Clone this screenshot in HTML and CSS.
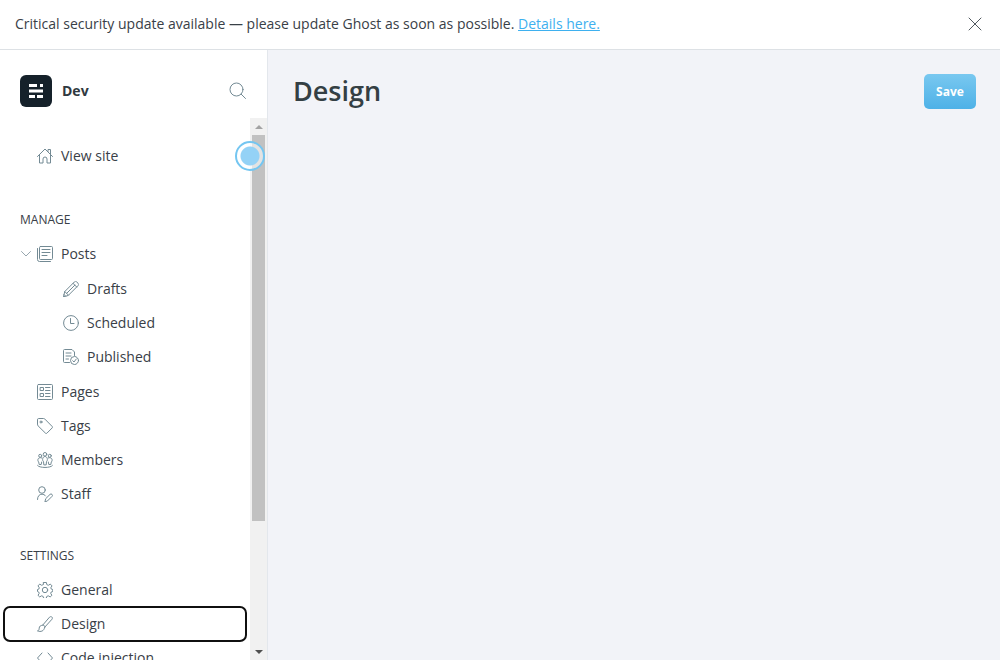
FILE: index.html
```html
<!DOCTYPE html>
<html lang="en">
<head>
<meta charset="utf-8">
<title>Design - Dev</title>
<link rel="stylesheet" href="styles.css">
</head>
<body>
<div class="app">
  <aside class="alert">
    <p>Critical security update available — please update Ghost as soon as possible. <a href="#details">Details here.</a></p>
    <button class="alert-close" type="button" aria-label="Close"><svg viewBox="0 0 14 14"><path d="M1 1l12 12M13 1L1 13"/></svg></button>
  </aside>
  <div class="viewport">
    <nav class="sidebar" aria-label="Main">
      <header class="site">
        <svg class="site-logo" viewBox="0 0 32 32"><rect width="32" height="32" rx="6" fill="#15212a"/><path fill="#fff" d="M9 9h8v3H9zM20 9h3v3h-3zM9 14.500h14v3H9zM9 20h6v3H9zM17 20h6v3h-6z"/></svg>
        <span class="site-name">Dev</span>
        <button class="search" type="button" aria-label="Search"><svg viewBox="0 0 18 18"><circle cx="7.500" cy="7.500" r="6.500"/><path d="M12.200 12.200l4.300 4.300"/></svg></button>
      </header>
      <div class="nav-body">
        <div class="nav-scroll">
          <ul class="nav-list nav-top">
            <li><a class="nav-item" href="#site"><svg class="icon" viewBox="0 0 16 16"><path d="M.5 8.500L8 1l7.500 7.500M2.500 7v8h3.500v-4a2 2 0 0 1 4 0v4h3.500V7M11 3.500v-2h2.500v4.500"/></svg>View site</a></li>
          </ul>
          <h2 class="nav-title">Manage</h2>
          <ul class="nav-list">
            <li class="nav-parent">
              <button class="expand" type="button" aria-label="Collapse posts"><svg viewBox="0 0 10 6"><path d="M.5.5L5 5 9.500.5"/></svg></button>
              <a class="nav-item" href="#posts"><svg class="icon" viewBox="0 0 16 16"><rect x="2.500" y=".5" width="13" height="13" rx="1"/><path d="M.5 2.500v11a2 2 0 0 0 2 2h11M5 3.500h8M5 6.500h8M5 9.500h5"/></svg>Posts</a>
              <ul class="nav-sub">
                <li><a class="nav-item" href="#drafts"><svg class="icon" viewBox="0 0 16 16"><path d="M.5 15.500l1.300-5L11.300 1a1.700 1.700 0 0 1 2.500 0L15 2.200a1.700 1.700 0 0 1 0 2.500L5.500 14.200zM1.800 10.500l3.700 3.700M10 2.300L13.700 6M3.700 12.300l8.200-8.200M1 13.500l1.500 1.500"/></svg>Drafts</a></li>
                <li><a class="nav-item" href="#scheduled"><svg class="icon" viewBox="0 0 16 16"><circle cx="8" cy="8" r="7.400"/><path d="M7.500 3.500v5H11"/></svg>Scheduled</a></li>
                <li><a class="nav-item" href="#published"><svg class="icon" viewBox="0 0 16 16"><path d="M6.500 13.500h-5a1 1 0 0 1-1-1v-11a1 1 0 0 1 1-1H9L11.500 3v3.500M3 4h5M3 7h5M3 10h2.500"/><circle cx="11.500" cy="11.500" r="4"/><path d="M9.700 11.700l1.300 1.300 2.300-3"/></svg>Published</a></li>
              </ul>
            </li>
            <li><a class="nav-item" href="#pages"><svg class="icon" viewBox="0 0 16 16"><rect x=".5" y=".5" width="15" height="15" rx="1"/><path d="M3.500 3.500h3v3h-3zM3.500 9.500h3v3h-3zM8.500 3.500H13M8.500 6.500H13M8.500 9.500H13M8.500 12.500H13"/></svg>Pages</a></li>
            <li><a class="nav-item" href="#tags"><svg class="icon" viewBox="0 0 16 16"><path d="M.5 1.500a1 1 0 0 1 1-1h5a2 2 0 0 1 1.400.6l7.300 7.400a1 1 0 0 1 0 1.400l-5.300 5.300a1 1 0 0 1-1.400 0L1.100 7.900A2 2 0 0 1 .5 6.500z"/><circle cx="4" cy="4" r="1"/></svg>Tags</a></li>
            <li><a class="nav-item" href="#members"><svg class="icon" viewBox="0 0 16 16"><circle cx="8" cy="2.300" r="1.800"/><circle cx="3.200" cy="3.800" r="1.500"/><circle cx="12.800" cy="3.800" r="1.500"/><path d="M6.800 12.500L6.500 9.500C4.900 8.500 5.500 4.500 8 4.500s3.100 4 1.500 5l-.3 3zM4.700 5.900C1.500 4.500-.3 8 1.700 10l.5 2.500h2l.5-2.500M11.300 5.900c3.200-1.400 5 2.100 3 4.100l-.5 2.500h-2l-.5-2.500M.5 13.500c1.500 2.700 13.500 2.700 15 0"/></svg>Members</a></li>
            <li><a class="nav-item" href="#staff"><svg class="icon" viewBox="0 0 16 16"><circle cx="5" cy="4" r="3.300"/><path d="M.5 13.500c0-3.500 2-5.300 4.500-5.300 1.500 0 2.700.6 3.500 1.700M8 15.500l.7-2.800 4.300-4.300a1.300 1.300 0 0 1 2 2l-4.300 4.300z"/></svg>Staff</a></li>
          </ul>
          <h2 class="nav-title">Settings</h2>
          <ul class="nav-list">
            <li><a class="nav-item" href="#general"><svg class="icon" viewBox="0 0 16 16"><path d="M6.600.5h2.800l.4 2.100 1.500.7 2-1.200 1.700 1.800-1.200 1.900.5 1.300 1.500.4v2l-1.600.5-.5 1.300 1.200 2-1.700 1.600-2-1.100-1.500.7-.4 1.900H6.600l-.4-1.900-1.500-.7-2 1.100L1 13.300l1.200-2-.5-1.300L.5 9.500v-2l1.300-.4.5-1.300L1 3.900l1.700-1.800 2 1.200 1.500-.7z"/><circle cx="8" cy="8" r="2.700"/></svg>General</a></li>
            <li><a class="nav-item nav-focused" href="#design"><svg class="icon" viewBox="0 0 16 16"><path d="M6 8.800L12.500 1.200c1.500-1.500 3.800.2 2.500 2L8.200 10.700M6 8.800l2.200 1.900M5.500 9.300c-2 0-3.200 1-3.300 2.900 0 1.500-.5 2.400-1.700 2.700 3.300 1.300 6.700.3 7.200-3.700"/></svg>Design</a></li>
            <li><a class="nav-item" href="#code"><svg class="icon" viewBox="0 0 16 16"><path d="M5 3L.5 8 5 13M11 3l4.500 5L11 13"/></svg>Code injection</a></li>
          </ul>
        </div>
        <div class="scrollbar" aria-hidden="true">
          <span class="arrow arrow-up"></span>
          <div class="track"><div class="thumb"></div></div>
          <span class="arrow arrow-down"></span>
        </div>
        <span class="pulse" aria-hidden="true"></span>
      </div>
    </nav>
    <main class="main">
      <h1>Design</h1>
      <button class="save" type="button">Save</button>
    </main>
  </div>
</div>
</body>
</html>
```
FILE: styles.css
```css
* { box-sizing: border-box; }
body {
  margin: 0;
  color: #394047;
  background: #fff;
  font: 14px/20px "Open Sans", "Noto Sans", sans-serif;
}
button { padding: 0; border: 0; background: none; cursor: pointer; font: inherit; }
ul { margin: 0; padding: 0; list-style: none; }
svg { display: block; fill: none; stroke-linecap: round; stroke-linejoin: round; }
.app { display: flex; flex-direction: column; height: 100vh; overflow: hidden; }
.alert {
  display: flex;
  align-items: center;
  justify-content: space-between;
  padding: 14px 18px 15px 15px;
  border-bottom: 1px solid #dde1e5;
}
.alert p { margin: 0; }
.alert a { color: #3eb0ef; }
.alert-close svg { width: 14px; height: 14px; stroke: #50595f; }
.viewport { display: flex; flex: 1; min-height: 0; }
.sidebar {
  display: flex;
  flex: none;
  flex-direction: column;
  width: 268px;
  border-right: 1px solid #e3e7ec;
}
.site { display: flex; align-items: center; padding: 25px 20px 11px; }
.site-logo { width: 32px; height: 32px; }
.site-name { flex: 1; margin-left: 10px; color: #303940; font-weight: 700; }
.search svg { width: 18px; height: 18px; stroke: #738a94; }
.nav-body { position: relative; display: flex; flex: 1; min-height: 0; }
.nav-scroll { flex: 1; min-width: 0; overflow: hidden; }
.nav-top { padding: 21px 0 2px; }
.nav-title {
  margin: 35px 0 7px;
  padding-left: 20px;
  font-size: 12px;
  font-weight: 400;
  line-height: 20px;
  text-transform: uppercase;
}
.nav-item {
  display: flex;
  align-items: center;
  gap: 8px;
  height: 34px;
  margin: 0 4px;
  padding-left: 33px;
  color: #394047;
  text-decoration: none;
}
.icon { flex: none; width: 16px; height: 16px; stroke: #738a94; }
.nav-parent { position: relative; }
.expand { position: absolute; top: 14px; left: 21px; }
.expand svg { width: 10px; height: 6px; stroke: #98a7af; }
.nav-sub { padding: 1px 0 1px 26px; }
.nav-focused { border-radius: 6px; outline: 2px solid #101010; outline-offset: -1px; }
.scrollbar { display: flex; flex: none; flex-direction: column; width: 17px; background: #f1f1f1; }
.arrow { display: flex; align-items: center; justify-content: center; height: 17px; }
.arrow::before { border: 4px solid transparent; content: ""; }
.arrow-up::before { border-top: 0; border-bottom-color: #a3a3a3; }
.arrow-down::before { border-top-color: #505050; border-bottom: 0; }
.track { flex: 1; padding: 0 2px; }
.thumb { height: 76%; background: #c1c1c1; }
.pulse {
  position: absolute;
  top: 23px;
  right: 2px;
  width: 30px;
  height: 30px;
  border: 2px solid #74c6f1;
  border-radius: 50%;
  background: radial-gradient(circle, #94d2f6 0 9px, rgba(255, 255, 255, .55) 10px);
}
.main {
  display: flex;
  flex: 1;
  align-items: flex-start;
  justify-content: space-between;
  padding: 24px 24px 24px 25px;
  background: #f2f3f8;
}
h1 { margin: 0; color: #343f44; font-size: 27px; font-weight: 600; line-height: 34px; }
.save {
  width: 52px;
  height: 35px;
  border-radius: 5px;
  background: linear-gradient(#79c8f0, #4eb1e7);
  color: #fff;
  font-size: 12px;
  font-weight: 700;
}
```
